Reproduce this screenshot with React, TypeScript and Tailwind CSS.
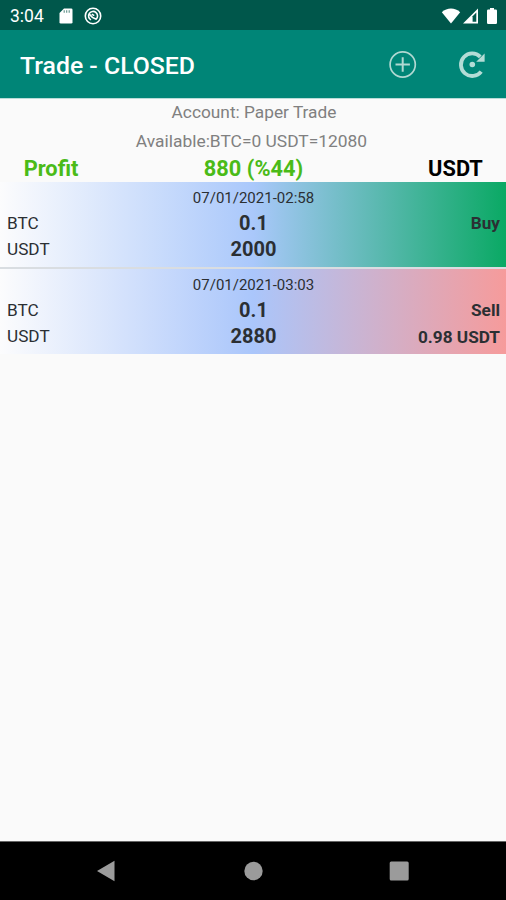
interface Trade {
  side: "Buy" | "Sell";
  date: string;
  amount: string;
  total: string;
  result?: string;
}

const trades: Trade[] = [
  { side: "Buy", date: "07/01/2021-02:58", amount: "0.1", total: "2000" },
  {
    side: "Sell",
    date: "07/01/2021-03:03",
    amount: "0.1",
    total: "2880",
    result: "0.98 USDT",
  },
];

function getTradeGradient(side: Trade["side"]): string {
  switch (side) {
    case "Buy":
      return "from-[#fcfcfd] via-[#aac8fb] to-[#0aa964]";
    case "Sell":
      return "from-[#fcfcfd] via-[#aac6fb] to-[#f69b9b]";
  }
}

function StatusBar() {
  return (
    <div className="flex h-[30px] items-center bg-[#00574b] pl-[10px] pr-[8px] pt-[1px] text-white">
      <span className="w-[49px] pt-[2px] text-[17.5px] leading-none">3:04</span>
      <svg width="14" height="16" viewBox="0 0 14 16" className="shrink-0">
        <path
          d="M5 0.5h7.2a1.3 1.3 0 0 1 1.3 1.3v12.4a1.3 1.3 0 0 1-1.3 1.3H1.8a1.3 1.3 0 0 1-1.3-1.3V5z"
          fill="#fff"
        />
        <path d="M5.2 2.2v2.6M7.7 2.2v2.6M10.2 2.2v2.6" stroke="#5d8f87" strokeWidth="1.1" />
      </svg>
      <svg width="18" height="18" viewBox="0 0 18 18" fill="none" stroke="#fff" className="ml-[11px] shrink-0">
        <circle cx="9" cy="9" r="7.7" strokeWidth="1.6" />
        <path d="M7 12.9A4.5 4.5 0 1 1 12 12.3" strokeWidth="1.6" />
        <path d="M5.2 7.2 8.4 10.4 12.400 12.300" strokeWidth="1.7" />
        <path d="M7.8 7.1 10.2 8.700" strokeWidth="1.5" />
      </svg>
      <div className="ml-auto flex items-center">
        <svg width="20" height="16" viewBox="0 0 20 16">
          <path d="M0.8 4.2C6-0.7 14-0.7 19.2 4.2L10 15.6z" fill="#fff" />
        </svg>
        <svg width="17" height="16" viewBox="0 0 17 16" className="ml-px">
          <path d="M16 0.5v15H1z" fill="#fff" />
          <path d="M10.600 8.2v5.600H14.300V4.600z" fill="#00574b" />
        </svg>
        <svg width="12" height="16" viewBox="0 0 12 16" className="ml-[7px]">
          <path
            d="M4 0h4v1.6h1.8a1.2 1.2 0 0 1 1.2 1.2v12a1.2 1.2 0 0 1-1.2 1.2H2.2a1.2 1.2 0 0 1-1.2-1.2v-12a1.2 1.2 0 0 1 1.2-1.2H4z"
            fill="#fff"
          />
        </svg>
      </div>
    </div>
  );
}

function AppBar() {
  return (
    <header className="flex h-[68px] items-center bg-[#008577] pl-[20px] pr-[18px]">
      <h1 className="grow pt-[5px] text-[24.8px] font-medium leading-none text-white">
        Trade - CLOSED
      </h1>
      <button type="button" aria-label="Add" className="mr-[38px]">
        <svg width="30" height="30" viewBox="0 0 30 30" fill="none" stroke="#b0d8d2">
          <circle cx="14.7" cy="15.5" r="12.6" strokeWidth="1.7" />
          <path d="M14.7 8.3v14.4M7.5 15.5h14.4" strokeWidth="2" />
        </svg>
      </button>
      <button type="button" aria-label="Refresh">
        <svg width="32" height="30" viewBox="0 0 32 30">
          <path d="M25.2 22.6A11.3 11.3 0 1 1 24.3 7.8" fill="none" stroke="#b3dcd6" strokeWidth="3.8" />
          <path d="M28.6 4.6v8.2h-8.4z" fill="#b3dcd6" />
          <circle cx="16.3" cy="15.5" r="2.8" fill="#b3dcd6" />
        </svg>
      </button>
    </header>
  );
}

function Summary() {
  return (
    <section className="border-t border-[#b9dcd8]">
      <p className="h-[28px] pl-[2px] text-center text-[17.3px] leading-[27px] text-[#808080]">
        Account: Paper Trade
      </p>
      <p className="h-[28px] pr-[3px] text-center text-[17.4px] leading-[28px] text-[#808080]">
        Available:BTC=0 USDT=12080
      </p>
      <div className="grid h-[27px] grid-cols-[102px_1fr_101px] text-center text-[21.8px] font-bold leading-[27px]">
        <span className="text-[#4abb18]">Profit</span>
        <span className="text-[#4abb18]">880 (%44)</span>
        <span className="text-black">USDT</span>
      </div>
    </section>
  );
}

function TradeRow({ trade }: { trade: Trade }) {
  return (
    <li
      className={`grid h-[85px] grid-cols-3 grid-rows-[28px_26px_27px] bg-linear-to-r/srgb pl-[7px] pr-[6px] pt-[2px] text-[#2b2f33] ${getTradeGradient(
        trade.side
      )}`}
    >
      <span className="col-span-3 text-center text-[15px] leading-[29px]">{trade.date}</span>
      <span className="text-[17.2px] leading-[23px]">BTC</span>
      <span className="text-center text-[20px] font-bold leading-[22px]">{trade.amount}</span>
      <span className="text-right text-[17.2px] font-bold leading-[23px]">{trade.side}</span>
      <span className="text-[17.2px] leading-[23px]">USDT</span>
      <span className="text-center text-[20px] font-bold leading-[23px]">{trade.total}</span>
      <span className="text-right text-[17.2px] font-bold leading-[24px]">{trade.result}</span>
    </li>
  );
}

function NavigationBar() {
  return (
    <nav className="flex h-[59px] items-center justify-between border-t border-[#666] bg-black pl-[96px] pr-[97px]">
      <svg width="20" height="22" viewBox="0 0 20 22">
        <path d="M1 11 18.5 0.8v20.4z" fill="#9b9b9b" />
      </svg>
      <svg width="20" height="20" viewBox="0 0 20 20">
        <circle cx="10.5" cy="10" r="9.2" fill="#9b9b9b" />
      </svg>
      <svg width="20" height="20" viewBox="0 0 20 20">
        <rect x="0.7" y="0.5" width="19" height="19" rx="1.5" fill="#9b9b9b" />
      </svg>
    </nav>
  );
}

export default function App() {
  return (
    <div className="flex h-[900px] w-[506px] flex-col bg-[#fafafa] font-['Roboto',sans-serif]">
      <StatusBar />
      <AppBar />
      <main className="grow">
        <Summary />
        <ul className="flex flex-col gap-[2px] bg-[#d9dde1]">
          {trades.map((trade) => (
            <TradeRow key={trade.date} trade={trade} />
          ))}
        </ul>
      </main>
      <NavigationBar />
    </div>
  );
}
